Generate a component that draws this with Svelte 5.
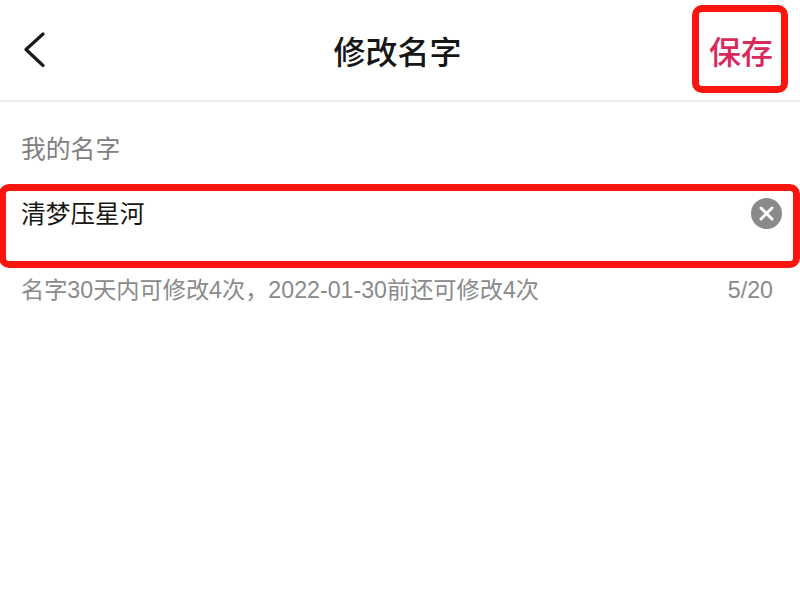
<script lang="ts">
	let name = '清梦压星河';
	const max = 20;
</script>

<div class="page">
	<header class="bar">
		<button class="back" aria-label="返回">
			<svg width="22" height="36" viewBox="0 0 22 36" fill="none">
				<path d="M20 2 L3 17.5 L20 33.5" stroke="#1a1a1a" stroke-width="3.2" stroke-linecap="round" stroke-linejoin="round" />
			</svg>
		</button>
		<h1 class="title">修改名字</h1>
		<button class="save">保存</button>
	</header>

	<div class="label">我的名字</div>

	<div class="field">
		<span class="value">{name}</span>
		<svg class="clear" width="31" height="31" viewBox="0 0 31 31">
			<circle cx="15.5" cy="15.5" r="15.5" fill="#8a8a8c" />
			<path d="M10 10 L21 21 M21 10 L10 21" stroke="#fff" stroke-width="3" stroke-linecap="round" />
		</svg>
	</div>

	<div class="hint">
		<span>名字30天内可修改4次，2022-01-30前还可修改4次</span>
		<span>{name.length}/{max}</span>
	</div>
</div>

<style>
	:global(body) {
		margin: 0;
		background: #fff;
	}

	.page {
		width: 800px;
		height: 600px;
		overflow: hidden;
		background: #fff;
		font-family: "Liberation Sans", "Noto Sans CJK SC", sans-serif;
	}

	.bar {
		position: relative;
		display: flex;
		align-items: center;
		justify-content: space-between;
		box-sizing: border-box;
		height: 102px;
		padding: 6px 12px 8px 23px;
		border-bottom: 2px solid #eeeeee;
	}

	.back {
		display: flex;
		padding: 0;
		margin-top: 2px;
		background: none;
		border: none;
	}

	.title {
		position: absolute;
		left: 0;
		right: 5px;
		top: 31px;
		margin: 0;
		text-align: center;
		font-size: 32px;
		line-height: 44px;
		font-weight: 500;
		color: #161616;
	}

	.save {
		box-sizing: border-box;
		width: 96px;
		height: 88px;
		padding: 2px 0 0 2px;
		background: none;
		border: 7px solid #fb1510;
		border-radius: 10px;
		font-family: inherit;
		font-size: 32px;
		font-weight: 500;
		color: #d92a5c;
	}

	.label {
		margin: 33px 0 0 21px;
		font-size: 24.8px;
		line-height: 30px;
		color: #808080;
	}

	.field {
		display: flex;
		align-items: flex-start;
		justify-content: space-between;
		box-sizing: border-box;
		width: 801px;
		height: 84px;
		margin: 19px 0 0 -1px;
		padding: 8px 11px 0 15px;
		border: 7px solid #fb1510;
		border-radius: 10px;
	}

	.value {
		font-size: 24.7px;
		line-height: 32px;
		color: #161616;
	}

	.clear {
		margin-top: -1px;
	}

	.hint {
		display: flex;
		justify-content: space-between;
		margin-top: 7px;
		padding: 0 27px 0 21px;
		font-size: 23.2px;
		line-height: 30px;
		color: #8a8a8a;
	}
</style>
